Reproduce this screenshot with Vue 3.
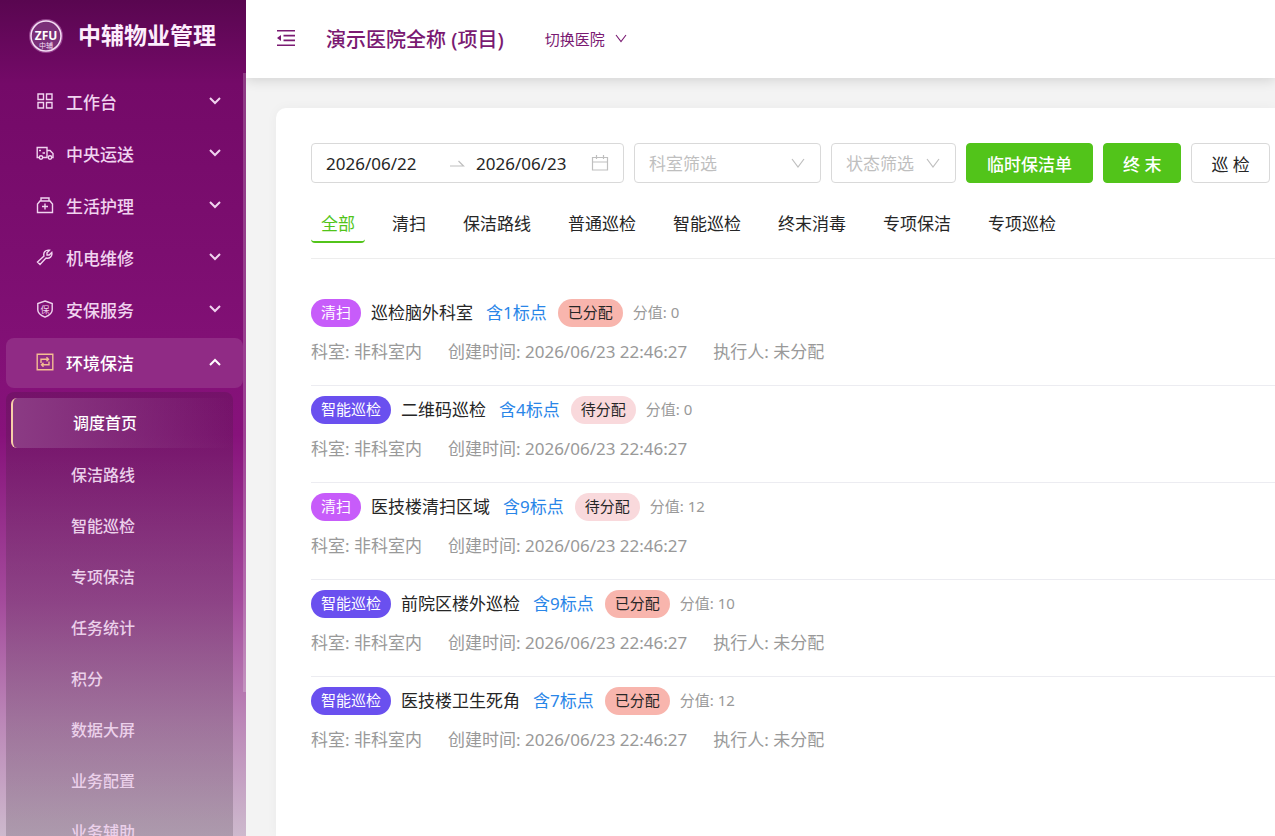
<script setup>
import { ref } from 'vue'

const menus = ['工作台', '中央运送', '生活护理', '机电维修', '安保服务', '环境保洁']
const openMenu = 5
const subMenus = ['调度首页', '保洁路线', '智能巡检', '专项保洁', '任务统计', '积分', '数据大屏', '业务配置', '业务辅助']
const tabs = ['全部', '清扫', '保洁路线', '普通巡检', '智能巡检', '终末消毒', '专项保洁', '专项巡检']
const activeTab = ref(0)
const startDate = ref('2026/06/22')
const endDate = ref('2026/06/23')
const tasks = [
  { type: '清扫', name: '巡检脑外科室', points: 1, assigned: true, score: 0 },
  { type: '智能巡检', name: '二维码巡检', points: 4, assigned: false, score: 0 },
  { type: '清扫', name: '医技楼清扫区域', points: 9, assigned: false, score: 12 },
  { type: '智能巡检', name: '前院区楼外巡检', points: 9, assigned: true, score: 10 },
  { type: '智能巡检', name: '医技楼卫生死角', points: 7, assigned: true, score: 12 },
]
</script>

<template>
  <div class="layout">
    <aside class="sidebar">
      <div class="brand">
        <svg class="logo" viewBox="0 0 36 36" aria-hidden="true">
          <circle cx="18" cy="18" r="16" fill="none" stroke="#c77fc4" stroke-opacity="0.5" stroke-width="2" />
          <circle cx="18" cy="18" r="15" fill="#7a2f78" stroke="#f5dff5" stroke-width="1.500" />
          <text x="18" y="22" text-anchor="middle" class="logo-main">ZFU</text>
          <text x="18" y="30" text-anchor="middle" class="logo-sub">中辅</text>
        </svg>
        <h1>中辅物业管理</h1>
      </div>
      <nav class="menu">
        <button v-for="(m, i) in menus" :key="m" class="menu-item" :class="{ open: i === openMenu }">
          <svg class="menu-icon" viewBox="0 0 18 18" fill="none" stroke="currentColor" stroke-width="1.400">
            <path v-if="i === 0" d="M2 2H7.500V7.500H2ZM10.500 2H16V7.500H10.500ZM2 10.500H7.500V16H2ZM10.500 10.500H16V16H10.500Z" />
            <template v-else-if="i === 1">
              <path d="M3 13.500H1.200V3.500H11V13.500H7M11 6.500H14L17 9.500V13.500H16M3 6.500H5M6.500 9H9" />
              <circle cx="5" cy="13.500" r="1.700" />
              <circle cx="14" cy="13.500" r="1.700" />
            </template>
            <path v-else-if="i === 2" d="M5 5V2H13V5M4 5H14L16.500 8V16.500H1.500V8ZM9 7.500V13.500M6 10.500H12" />
            <path v-else-if="i === 3" d="M1.500 14 8 8C7 4.500 9.500 1.500 13.500 2.200L11 4.800V7H13.200L15.800 4.500C16.500 8.500 13.500 11 10 10L4 16.500Z" />
            <template v-else-if="i === 4">
              <path d="M9 1 16.200 3.500V10C16.200 13 13 15.500 9 17.200C5 15.500 1.800 13 1.800 10V3.500Z" />
              <text x="9" y="12.500" text-anchor="middle" class="shield-text">保</text>
            </template>
            <path v-else d="M1.200 1.200H16.800V16.800H1.200ZM5 10V6.200H12.500M10.500 4.200 12.500 6.200 10.500 8.200M13 8.500V11.800H5.500M7.500 9.800 5.500 11.800 7.500 13.800" />
          </svg>
          <span>{{ m }}</span>
          <svg class="chevron" viewBox="0 0 12 8" fill="none" stroke="currentColor" stroke-width="2">
            <path :d="i === openMenu ? 'M1 7 6 2 11 7' : 'M1 1 6 6 11 1'" />
          </svg>
        </button>
        <ul class="submenu">
          <li v-for="(s, i) in subMenus" :key="s">
            <a href="#" :class="{ current: i === 0 }">{{ s }}</a>
          </li>
        </ul>
      </nav>
      <div class="scroll-thumb"></div>
    </aside>

    <div class="main">
      <header class="topbar">
        <button class="fold" aria-label="收起菜单">
          <svg viewBox="0 0 18 16" fill="none" stroke="currentColor" stroke-width="1.600">
            <path d="M0 .800H18M6.500 5.600H18M6.500 10.400H18M0 15.200H18" />
            <path d="M0 8 4 5V11Z" fill="currentColor" stroke="none" />
          </svg>
        </button>
        <h2>演示医院全称 (项目)</h2>
        <button class="switch">
          切换医院
          <svg viewBox="0 0 12 9" fill="none" stroke="currentColor" stroke-width="1.100"><path d="M1 1 6 7.500 11 1" /></svg>
        </button>
      </header>

      <main class="card">
        <form class="filters" @submit.prevent>
          <div class="range">
            <input v-model="startDate" class="start" aria-label="开始日期" />
            <svg class="arrow" viewBox="0 0 16 8" fill="none" stroke="currentColor" stroke-width="1.200"><path d="M1 7H14.500L9.500 2" /></svg>
            <input v-model="endDate" class="end" aria-label="结束日期" />
            <svg class="calendar" viewBox="0 0 18 18" fill="none" stroke="currentColor" stroke-width="1.200">
              <path d="M1.500 3.500H16.500V16H1.500ZM1.500 8H16.500M5.500 1V5M12.500 1V5" />
            </svg>
          </div>
          <label class="picker wide">
            <select aria-label="科室筛选"><option>科室筛选</option></select>
            <svg viewBox="0 0 14 10" fill="none" stroke="currentColor" stroke-width="1.200"><path d="M1 1 7 9 13 1" /></svg>
          </label>
          <label class="picker">
            <select aria-label="状态筛选"><option>状态筛选</option></select>
            <svg viewBox="0 0 14 10" fill="none" stroke="currentColor" stroke-width="1.200"><path d="M1 1 7 9 13 1" /></svg>
          </label>
          <button class="btn primary">临时保洁单</button>
          <button class="btn primary">终 末</button>
          <button class="btn">巡 检</button>
        </form>

        <div class="tabs" role="tablist">
          <button
            v-for="(t, i) in tabs"
            :key="t"
            role="tab"
            :aria-selected="i === activeTab"
            :class="{ active: i === activeTab }"
            @click="activeTab = i"
          >{{ t }}</button>
        </div>

        <ul class="tasks">
          <li v-for="(t, i) in tasks" :key="i">
            <div class="summary">
              <span class="tag" :class="t.type === '清扫' ? 'sweep' : 'smart'">{{ t.type }}</span>
              <span class="name">{{ t.name }}</span>
              <a href="#" class="points">含{{ t.points }}标点</a>
              <span class="tag" :class="t.assigned ? 'assigned' : 'pending'">{{ t.assigned ? '已分配' : '待分配' }}</span>
              <span class="score">分值: {{ t.score }}</span>
            </div>
            <div class="meta">
              <span>科室: 非科室内</span>
              <span>创建时间: 2026/06/23 22:46:27</span>
              <span v-if="t.assigned">执行人: 未分配</span>
            </div>
          </li>
        </ul>
      </main>
    </div>
  </div>
</template>

<style>
body {
  margin: 0;
  overflow: hidden;
}
</style>

<style scoped>
.layout {
  display: flex;
  height: 100vh;
  overflow: hidden;
  background: #f3f3f3;
  font-family: "Noto Sans", "Noto Sans CJK SC", sans-serif;
  font-size: 17px;
  color: #262626;
}
button,
input,
select {
  font: inherit;
  color: inherit;
  background: none;
  border: 0;
  padding: 0;
  margin: 0;
}
button {
  cursor: pointer;
}
svg {
  flex: none;
}
ul {
  list-style: none;
  margin: 0;
  padding: 0;
}
a {
  text-decoration: none;
}

.sidebar {
  position: relative;
  flex: none;
  box-sizing: border-box;
  width: 246px;
  height: 100%;
  overflow: hidden;
  background: linear-gradient(#590650 0%, #740a68 10%, #7c0e70 30%, #87127b 52%, #a44b9c 72%, #bb86b7 86%, #cdb9cd 100%);
}
.brand {
  display: flex;
  align-items: center;
  height: 77px;
  box-sizing: border-box;
  padding: 0 0 5px 28px;
}
.logo {
  width: 36px;
  height: 36px;
  margin-right: 14px;
}
.logo-main {
  font: 700 12px "Noto Sans", sans-serif;
  fill: #fff;
}
.logo-sub {
  font: 7px "Noto Sans CJK SC", sans-serif;
  fill: #f5dff5;
}
.brand h1 {
  margin: 0;
  padding-bottom: 4px;
  font-size: 23px;
  font-weight: 700;
  color: #fdeefd;
}
.menu {
  display: flex;
  flex-direction: column;
  gap: 2px;
  padding: 0 3px 0 6px;
}
.menu-item {
  display: flex;
  align-items: center;
  flex: none;
  box-sizing: border-box;
  height: 50px;
  padding: 0 22px 2px 30px;
  border-radius: 8px;
  font-weight: 500;
  color: #f0d3ef;
}
.menu-item.open {
  margin-top: 1px;
  color: #fff;
  background: #902b85;
}
.menu-icon {
  width: 18px;
  height: 18px;
  margin-right: 12px;
}
.open .menu-icon {
  color: #f4bd92;
}
.shield-text {
  font: 9px "Noto Sans CJK SC", sans-serif;
  fill: currentColor;
  stroke: none;
}
.chevron {
  width: 12px;
  height: 8px;
  margin-left: auto;
}
.submenu {
  display: flex;
  flex-direction: column;
  gap: 1px;
  margin: 2px 10px 0 0;
  padding: 6px 0 20px 5px;
  border-radius: 8px;
  background: linear-gradient(rgba(80, 20, 70, 0.3), rgba(100, 90, 100, 0.3));
}
.submenu a {
  display: block;
  padding-left: 60px;
  font-size: 16px;
  line-height: 50px;
  font-weight: 500;
  color: #ebd0ea;
}
.submenu a.current {
  margin-bottom: 1px;
  border-left: 2px solid #f6cfa8;
  border-radius: 6px;
  color: #fff;
  background: linear-gradient(90deg, #8b3b84, rgba(118, 18, 108, 0));
}
.scroll-thumb {
  position: absolute;
  right: 0;
  top: 73px;
  width: 3px;
  height: 74%;
  background: rgba(255, 255, 255, 0.2);
}

.main {
  flex: 1;
  min-width: 0;
  display: flex;
  flex-direction: column;
}
.topbar {
  display: flex;
  align-items: center;
  flex: none;
  box-sizing: border-box;
  height: 78px;
  padding: 0 0 2px 31px;
  background: #fff;
  box-shadow: 0 2px 12px rgba(0, 0, 0, 0.14);
  color: #7a1a72;
}
.fold {
  display: flex;
}
.fold svg {
  width: 18px;
  height: 16px;
}
.topbar h2 {
  margin: 0 41px 0 31px;
  font-size: 20px;
  font-weight: 500;
}
.switch {
  display: flex;
  align-items: center;
  gap: 10px;
  font-size: 15px;
}
.switch svg {
  width: 12px;
  height: 9px;
}

.card {
  flex: 1;
  margin: 30px 0 0 30px;
  padding: 35px 0 0 35px;
  border-radius: 10px 0 0 0;
  background: #fff;
  box-shadow: 0 0 12px rgba(0, 0, 0, 0.04);
}
.filters {
  display: flex;
  gap: 10px;
}
.filters > * {
  flex: none;
  box-sizing: border-box;
  height: 40px;
  border-radius: 4px;
}
.range,
.picker {
  display: flex;
  align-items: center;
  border: 1px solid #d9d9d9;
}
.range {
  width: 313px;
  padding: 0 14px;
}
.range input {
  min-width: 0;
}
.range .start {
  width: 123px;
}
.range .end {
  flex: 1;
}
.range .arrow {
  width: 16px;
  height: 8px;
  margin-right: 11px;
  color: #bfbfbf;
}
.range .calendar {
  width: 18px;
  height: 18px;
  color: #bfbfbf;
}
.picker {
  position: relative;
  width: 125px;
  color: #bfbfbf;
}
.picker.wide {
  width: 187px;
}
.picker select {
  width: 100%;
  height: 100%;
  padding-left: 14px;
  appearance: none;
}
.picker svg {
  position: absolute;
  right: 15px;
  width: 14px;
  height: 10px;
  pointer-events: none;
}
.btn {
  padding: 0 19px;
  border: 1px solid #d9d9d9;
}
.btn.primary {
  border-color: #52c41a;
  background: #52c41a;
  color: #fff;
  font-weight: 500;
}
.btn.primary:first-of-type {
  padding: 0 20px;
}

.tabs {
  display: flex;
  gap: 17px;
  margin-top: 20px;
  padding-bottom: 15px;
  border-bottom: 1px solid #ededed;
}
.tabs button {
  box-sizing: border-box;
  height: 40px;
  padding: 0 10px;
  border-bottom: 2px solid transparent;
  border-radius: 4px;
}
.tabs .active {
  color: #52c41a;
  border-bottom-color: #52c41a;
}

.tasks {
  margin-top: 30px;
}
.tasks li {
  padding: 10px 0 20px;
  border-bottom: 1px solid #ececf1;
}
.tasks li:last-child {
  border-bottom: 0;
}
.summary {
  display: flex;
  align-items: center;
  gap: 10px;
  line-height: 28px;
}
.tag {
  box-sizing: border-box;
  height: 28px;
  padding: 0 10px;
  border-radius: 14px;
  font-size: 15px;
  line-height: 26px;
}
.sweep,
.smart {
  color: #fff;
  background: #c75cfa;
}
.smart {
  background: #6a50ef;
}
.assigned {
  background: #f8b5ad;
}
.pending {
  background: #f9d9dc;
}
.name {
  margin-right: 3px;
}
.points {
  margin-right: 1px;
  color: #2a86e8;
}
.score {
  font-size: 15px;
  line-height: 26px;
  padding-bottom: 2px;
  color: #999;
}
.meta {
  display: flex;
  gap: 26px;
  margin-top: 12px;
  line-height: 26px;
  color: #999;
}
</style>
